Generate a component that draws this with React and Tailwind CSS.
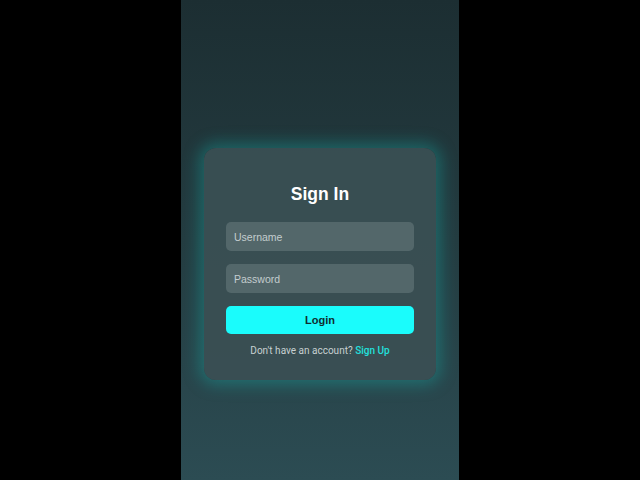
export default function App() {
  return (
    <div className="flex h-[480px] w-full justify-center bg-black font-['Liberation_Sans',Arial,sans-serif]">
      <div className="flex h-full w-[278px] flex-col items-center bg-gradient-to-b from-[#1c2e32] via-[#243c41] to-[#2c4c53] pt-[148px]">
        <div className="flex w-[232px] flex-col rounded-xl bg-[#3a4f53]/95 px-[22px] pt-[35px] pb-[23px] shadow-[0_0_16px_5px_rgba(20,190,180,0.35)]">
          <h1 className="text-center text-[17.5px] font-bold leading-[22px] text-white">Sign In</h1>
          <form className="mt-[17px] flex flex-col gap-[13px]" onSubmit={(e) => e.preventDefault()}>
            <input
              type="text"
              placeholder="Username"
              className="h-[29px] w-full rounded-[5px] bg-[#53676a] px-[8px] text-[10.5px] text-white placeholder:text-[#c3cdce] focus:outline-none"
            />
            <input
              type="password"
              placeholder="Password"
              className="h-[29px] w-full rounded-[5px] bg-[#53676a] px-[8px] text-[10.5px] text-white placeholder:text-[#c3cdce] focus:outline-none"
            />
            <button
              type="submit"
              className="h-[28px] w-full rounded-[5px] bg-[#1afcfc] text-[11px] font-bold text-[#0f2d30]"
            >
              Login
            </button>
          </form>
          <p className="mt-[10px] text-center font-['Roboto',sans-serif] text-[10px] leading-[13px] text-[#c7d0d1]">
            Don&apos;t have an account?{" "}
            <span className="font-medium text-[#22e0dc]">Sign Up</span>
          </p>
        </div>
      </div>
    </div>
  );
}
